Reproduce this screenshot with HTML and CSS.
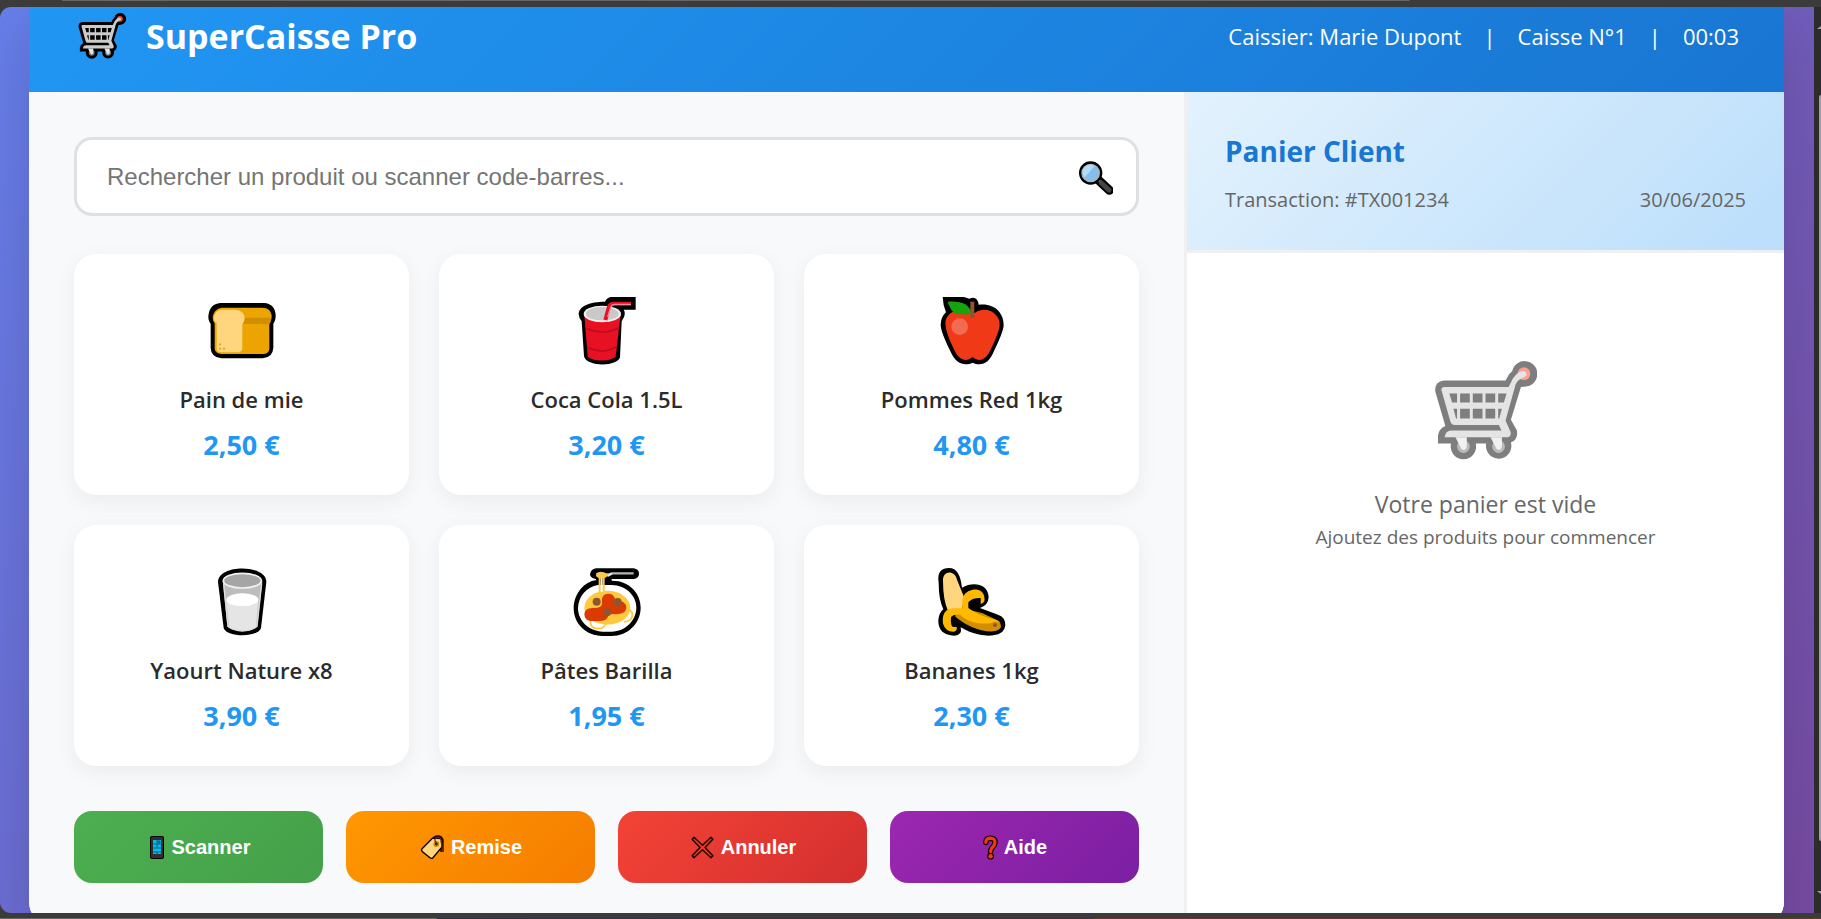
FILE: index.html
```html
<!DOCTYPE html>
<html lang="fr">
<head>
<meta charset="utf-8">
<title>SuperCaisse Pro</title>
<link rel="stylesheet" href="styles.css">
</head>
<body>
<svg class="defs" aria-hidden="true">
  <symbol id="cart" viewBox="102 56 308 308">
    <path d="M120 120H316L326 102L336 92A38 38 0 1 1 378 138L362 140L332 238L350 270Q354 298 332 306A38 38 0 1 1 258 309H227A38 38 0 1 1 153 309H114V284Q117 264 136 256L106 154Q102 124 132 120Z" fill="#000"/>
    <circle cx="371" cy="100" r="19" fill="#f8432a"/>
    <path d="M124 148Q124 140 134 140H325L338 114Q354 92 370 92Q382 96 378 107Q352 116 346 132L316 240L331 274Q334 290 320 290H134Q136 270 154 270H304L296 253H164Q154 253 151 243Z" fill="#cbcbcb"/>
    <path d="M148 159H171V186H156ZM180 159H209V186H180ZM218 159H247V186H218ZM256 159H285V186H256ZM294 159H319L311 186H294ZM160 205H171V234H168ZM180 205H209V234H180ZM218 205H247V234H218ZM256 205H285V234H256ZM294 205H305L297 234H294Z" fill="#000"/>
    <circle cx="190" cy="318" r="19" fill="#777"/><circle cx="295" cy="318" r="19" fill="#777"/>
    <path d="M166 290H200V318Q198 328 190 328Q182 326 180 317ZM271 290H305V318Q303 328 295 328Q287 326 285 317Z" fill="#e4e4e4"/>
  </symbol>
</svg>
<div class="window">
  <div class="viewport">
    <div class="app">
      <header class="topbar">
        <h1 class="brand"><svg class="brand-icon" aria-hidden="true"><use href="#cart"/></svg>SuperCaisse Pro</h1>
        <div class="session"><span>Caissier: Marie Dupont</span><span>|</span><span>Caisse N°1</span><span>|</span><span>00:03</span></div>
      </header>
      <div class="columns">
        <main class="products">
          <div class="search">
            <input class="search-input" type="text" aria-label="Rechercher un produit" placeholder="Rechercher un produit ou scanner code-barres...">
            <svg class="search-icon" viewBox="0 0 105 105" aria-hidden="true">
              <path d="M58 54L94 88" stroke="#000" stroke-width="27" stroke-linecap="round"/>
              <path d="M57 53L66 62" stroke="#aaa" stroke-width="8"/>
              <path d="M70 66L93 87" stroke="#454545" stroke-width="15" stroke-linecap="round"/>
              <circle cx="38" cy="36" r="35" fill="#000"/>
              <circle cx="38" cy="36" r="28" fill="#b4b4b4"/>
              <circle cx="38" cy="36" r="24" fill="#83beec"/>
              <path d="M20 49A22 22 0 0 1 49 16Z" fill="#b1dcf7"/>
            </svg>
          </div>
          <div class="grid">
            <article class="card">
              <svg class="card-icon" viewBox="46 45 216 216" aria-hidden="true">
                <path d="M89 69H220C243 70 255 86 255 106Q255 123 248 131V204Q246 233 216 235H92Q61 232 60 204V131Q53 124 53 109Q56 72 89 69Z"/>
                <path d="M94 83H215Q240 84 243 106Q243 122 236 128V207Q234 221 220 222H92Q73 219 72 206V130Q64 122 67 106Q72 86 94 83Z" fill="#eba400"/>
                <path d="M158 113H242Q242 126 236 132H155Z" fill="#d38e00"/>
                <path d="M93 89H134Q159 91 162 113Q161 127 155 132V207Q153 216 145 217H88Q78 215 78 205V130Q68 122 70 110Q75 91 93 89Z" fill="#ffd57d"/>
                <path d="M85 193h6M88 190v6M85 206h6M88 203v6M97 206h6M100 203v6" stroke="#d99a1d" stroke-width="3"/>
              </svg>
              <h2 class="card-name">Pain de mie</h2><p class="card-price">2,50 €</p>
            </article>
            <article class="card">
              <svg class="card-icon" viewBox="31 45 216 216" aria-hidden="true">
                <path d="M54 103C54 78 88 65 133 65Q140 51 153 51H225V89H189Q195 98 190 111L183 124L178 232C171 261 75 261 70 228L63 124Q55 115 54 103Z"/>
                <path d="M71 104L81 229C93 246 153 246 165 229L180 104Z" fill="#e81123"/>
                <path d="M78 145Q125 168 176 143M81 202Q125 225 167 200" fill="none" stroke="#bb0d20" stroke-width="5"/>
                <ellipse cx="125" cy="102" rx="56" ry="25" fill="#eee"/><ellipse cx="125" cy="101" rx="49" ry="20" fill="#c9c9c9"/>
                <path d="M134 120L145 80Q149 71 158 71H211" fill="none" stroke="#e81123" stroke-width="12"/>
                <path d="M141 111L150 82Q153 73 162 73H211" fill="none" stroke="#f58a92" stroke-width="4"/>
              </svg>
              <h2 class="card-name">Coca Cola 1.5L</h2><p class="card-price">3,20 €</p>
            </article>
            <article class="card">
              <svg class="card-icon" viewBox="46 45 216 216" aria-hidden="true">
                <path d="M66 51H130Q140 54 146 56Q170 46 174 74C220 68 251 97 249 139Q246 160 220 213C205 252 181 259 156 248C132 260 106 251 92 220Q61 158 60 136Q60 111 76 97Q67 77 66 51Z"/>
                <path d="M74 130C75 99 110 80 149 98Q155 102 163 98C200 75 239 103 237 136Q236 155 211 207C196 240 177 248 155 231C137 247 116 242 101 210Q75 160 74 130Z" fill="#f03a17"/>
                <path d="M81 65C120 62 145 70 155 102Q125 104 106 102Q91 96 81 65Z" fill="#16a30d"/>
                <path d="M155 65V114" stroke="#8e562e" stroke-width="12"/>
                <circle cx="117" cy="140" r="25" fill="#f16b50"/>
              </svg>
              <h2 class="card-name">Pommes Red 1kg</h2><p class="card-price">4,80 €</p>
            </article>
            <article class="card">
              <svg class="card-icon" viewBox="46 48 216 216" aria-hidden="true">
                <path d="M82 96C82 42 227 42 227 96L211 234C202 263 109 263 99 234Z"/>
                <path d="M96 93L110 229C120 247 190 247 200 229L215 93Z" fill="#bdbdbd"/>
                <path d="M106 149H203L196 232C184 245 126 245 116 232Z" fill="#e5e5e5"/>
                <ellipse cx="155" cy="149" rx="48" ry="19" fill="#fff"/>
                <ellipse cx="155" cy="92" rx="57" ry="22" fill="#a5a5a5" stroke="#f1f1f1" stroke-width="5"/>
                <path d="M99 100L112 229Q130 243 155 243T199 229L213 100" fill="none" stroke="#dedede" stroke-width="4"/>
              </svg>
              <h2 class="card-name">Yaourt Nature x8</h2><p class="card-price">3,90 €</p>
            </article>
            <article class="card">
              <svg class="card-icon" viewBox="31 48 216 216" aria-hidden="true">
                <path d="M106 55H219Q235 58 235 71T219 87H153V92C205 91 241 130 240 174C239 223 199 258 153 258H125C78 257 39 223 39 174C40 130 72 94 106 91V87Q90 84 88 74Q90 57 106 55Z"/>
                <path d="M112 105H153C197 106 227 137 227 174C226 213 193 244 153 245H126C84 243 52 213 52 174C53 139 78 110 112 105Z" fill="#fff"/>
                <path d="M107 73Q121 65 134 73H145L154 70H219" fill="none" stroke="#b6b6b6" stroke-width="7"/>
                <path d="M140 78L154 71" stroke="#e8e8e8" stroke-width="6"/>
                <ellipse cx="140" cy="173" rx="69" ry="51" fill="#ffc83d"/>
                <path d="M89 213Q88 235 112 236Q133 235 136 217M190 216Q220 212 214 188L205 176" fill="none" stroke="#ffc83d" stroke-width="5"/>
                <path d="M117 78V132M129 78V132" stroke="#ffc83d" stroke-width="6"/>
                <path d="M123 83V126" stroke="#fff" stroke-width="5"/>
                <ellipse cx="123" cy="76" rx="17" ry="9" fill="#ffc83d"/>
                <path d="M71 193Q72 174 96 174Q122 175 124 161V147Q126 131 145 131Q161 132 164 151Q197 152 197 174Q195 195 158 192Q142 193 140 204Q133 214 115 213H89Q72 211 71 193Z" fill="#da3b01"/>
                <g fill="#8e562e"><circle cx="108" cy="155" r="12"/><circle cx="171" cy="156" r="12"/><circle cx="139" cy="187" r="12"/></g>
              </svg>
              <h2 class="card-name">Pâtes Barilla</h2><p class="card-price">1,95 €</p>
            </article>
            <article class="card">
              <svg class="card-icon" viewBox="46 48 216 216" aria-hidden="true">
                <path d="M54 98C49 66 63 54 85 54C109 54 120 76 124 113C157 94 202 101 204 141Q203 166 178 174L232 194Q254 201 254 226Q251 254 218 256C178 261 140 244 120 232Q126 257 101 257C70 257 52 241 53 211Q55 188 68 178Q54 148 54 98Z"/>
                <path d="M67 92C66 59 103 60 109 89L130 141L124 178L102 194L82 182Q67 150 67 92Z" fill="#ffd57d"/>
                <path d="M104 193L135 177L186 190L228 210Q241 216 241 231Q237 241 219 244C174 246 133 224 104 200Z" fill="#d38e00"/>
                <path d="M143 174V157Q154 143 180 144V162Q195 157 191 142C189 112 145 111 129 137Q123 150 125 175H98C72 176 64 195 67 221Q75 246 100 245Q110 243 108 231H97Q89 229 91 201Q100 192 118 194C139 216 181 225 212 219Q225 210 240 219Q232 209 213 206Q169 195 143 174Z" fill="#ffb900"/>
                <circle cx="223" cy="225" r="6" fill="#8e562e"/>
              </svg>
              <h2 class="card-name">Bananes 1kg</h2><p class="card-price">2,30 €</p>
            </article>
          </div>
          <div class="actions">
            <button class="action scan" type="button"><svg class="i-phone" viewBox="0 0 20 27" aria-hidden="true"><rect x="3" y="2" width="14" height="23" rx="2"/><rect x="4" y="3" width="12" height="21" rx="1" fill="#303030"/><rect x="6" y="6" width="8" height="14" fill="#00bcf2"/><path d="M10 6v8M6 10h8M6 14h8M6 18h8M12 6v4M10 8h4M10 18v2" stroke="#083b4c" stroke-width=".7"/></svg>Scanner</button>
            <button class="action discount" type="button"><svg class="i-wide" viewBox="0 0 27 27" aria-hidden="true"><path d="M15 4Q21 1 23 6V18" fill="none" stroke="#250500" stroke-width="3.4"/><path d="M2.8 15L13.7 4L22 4.5L23 13L13.7 24Q12.5 25 11 23.8L3.2 17.5Q2.3 16.4 2.8 15Z" fill="#ffd57d" stroke="#000" stroke-width="1.3"/><circle cx="17.3" cy="10" r="2.9" fill="#d38e00"/><circle cx="17.3" cy="10" r="1.4" fill="#4b1904"/><path d="M17.5 9Q14 5 18 3.5Q23 3 22.5 9L23.6 18" fill="none" stroke="#76200c" stroke-width="1.3"/></svg>Remise</button>
            <button class="action cancel" type="button"><svg class="i-wide" viewBox="0 0 27 27" aria-hidden="true"><path d="M5 3.2L3.2 5.2L11 13.5L3.2 21.8L5 23.8L13.5 15.8L22 23.8L23.8 21.8L16 13.5L23.8 5.2L22 3.2L13.5 11.2Z" fill="#f03a17" stroke="#180400" stroke-width="1.5" stroke-linejoin="round"/></svg>Annuler</button>
            <button class="action help" type="button"><svg class="i-help" viewBox="0 0 17 27" aria-hidden="true"><path d="M3.8 8.4Q3.9 4.2 8.5 4.2Q13.2 4.4 13 8.5Q12.9 11 10.5 13.2Q8.6 15 8.6 17.6" fill="none" stroke="#180400" stroke-width="5.6" stroke-linecap="round"/><circle cx="8.6" cy="22.2" r="3.4" fill="#180400"/><path d="M3.8 8.4Q3.9 4.2 8.5 4.2Q13.2 4.4 13 8.5Q12.9 11 10.5 13.2Q8.6 15 8.6 17.4" fill="none" stroke="#f03a17" stroke-width="3.2" stroke-linecap="round"/><circle cx="8.6" cy="22.2" r="2.2" fill="#f03a17"/></svg>Aide</button>
          </div>
        </main>
        <aside class="basket">
          <div class="basket-head">
            <h2 class="basket-title">Panier Client</h2>
            <div class="basket-meta"><span>Transaction: #TX001234</span><span>30/06/2025</span></div>
          </div>
          <div class="empty">
            <svg class="empty-icon" aria-hidden="true"><use href="#cart"/></svg>
            <p class="empty-title">Votre panier est vide</p>
            <p class="empty-hint">Ajoutez des produits pour commencer</p>
          </div>
        </aside>
      </div>
    </div>
  </div>
  <div class="scrollbar"><span class="arrow-up"></span><span class="thumb"></span><span class="arrow-down"></span></div>
</div>
</body>
</html>
```
FILE: styles.css
```css
* { box-sizing: border-box; margin: 0; padding: 0; }

body {
  background: #3b3b3b;
  font-family: "Segoe UI", "Open Sans", "Noto Sans", sans-serif;
  color: #2b2b2b;
}

.defs { display: none; }

.window {
  display: flex;
  height: 100vh;
  padding: 7px 0 6px;
  background:
    linear-gradient(#666, #666) 62px 0 / 74% 1px no-repeat,
    linear-gradient(90deg, #666 24%, #334 24%, #423038 60%, #623632 60%) 0 100% / 100% 1px no-repeat,
    #3b3b3b;
}

.viewport {
  flex: 1;
  display: flex;
  overflow: hidden;
  padding: 0 30px 0 29px;
  border-radius: 11px 0 0 11px;
  background: linear-gradient(135deg, #667eea, #764ba2);
}

.scrollbar {
  width: 7px;
  display: flex;
  flex-direction: column;
  align-items: flex-end;
  overflow: hidden;
  background: #2c2c2c;
}
.thumb { flex: 1; width: 2px; margin: 66px 0 50px; border-radius: 2px 0 0 2px; background: #9f9f9f; }
.arrow-up, .arrow-down { width: 4px; height: 3px; background: #9f9f9f; }
.arrow-up { margin-top: 19px; clip-path: polygon(100% 0, 100% 100%, 0 100%); }
.arrow-down { margin-bottom: 19px; clip-path: polygon(0 0, 100% 0, 100% 100%); }

.app {
  flex: 1;
  display: flex;
  flex-direction: column;
  margin-bottom: -11px;
  overflow: hidden;
  border-radius: 0 0 22px 22px;
  background: #fff;
  box-shadow: 0 20px 60px rgba(0, 0, 0, .15);
}

.topbar {
  display: flex;
  justify-content: space-between;
  align-items: center;
  padding: 0 45px 27px 49px;
  line-height: 58px;
  background: linear-gradient(135deg, #2196f3, #1976d2);
  color: #fff;
}
.brand { display: flex; align-items: center; gap: 20px; font-size: 34px; font-weight: 700; }
.brand-icon { width: 48px; height: 48px; }
.session { display: flex; gap: 22px; font-size: 22px; }

.columns { flex: 1; display: flex; }

.products { flex: 1; padding: 45px; background: #f8f9fb; }

.search { position: relative; margin-bottom: 38px; }
.search-input {
  display: block;
  width: 100%;
  height: 79px;
  padding: 0 80px 0 30px;
  border: 3px solid #e0e0e0;
  border-radius: 18px;
  background: #fff;
  font: 24px "Liberation Sans", Arial, sans-serif;
}
.search-input::placeholder { color: #757575; opacity: 1; }
.search-icon { position: absolute; right: 26px; top: 24px; width: 35px; height: 35px; }

.grid { display: grid; grid-template-columns: repeat(3, 1fr); gap: 30px; margin-bottom: 45px; }
.card {
  display: flex;
  flex-direction: column;
  align-items: center;
  padding: 41px 16px 34px;
  border-radius: 22px;
  background: #fff;
  box-shadow: 0 6px 22px rgba(0, 0, 0, .06);
}
.card-icon { width: 72px; height: 72px; margin-bottom: 16px; }
.card-name { margin-bottom: 14px; font-size: 22px; line-height: 32px; font-weight: 600; }
.card-price { font-size: 27px; line-height: 32px; font-weight: 700; color: #2196f3; }

.actions { display: grid; grid-template-columns: repeat(4, 1fr); gap: 23px; }
.action {
  display: flex;
  align-items: center;
  justify-content: center;
  gap: 5px;
  height: 72px;
  border: 0;
  border-radius: 18px;
  color: #fff;
  font: bold 20px "Liberation Sans", Arial, sans-serif;
}
.action svg { height: 27px; }
.i-phone { width: 20px; }
.i-wide { width: 27px; }
.i-help { width: 17px; }
.scan { background: linear-gradient(135deg, #4caf50, #45a049); }
.discount { background: linear-gradient(135deg, #ff9800, #f57c00); }
.cancel { background: linear-gradient(135deg, #f44336, #d32f2f); }
.help { background: linear-gradient(135deg, #9c27b0, #7b1fa2); }

.basket { width: 600px; border-left: 3px solid #f0f0f0; background: #fff; }
.basket-head {
  padding: 39px 38px 35px;
  border-bottom: 3px solid #f0f0f0;
  background: linear-gradient(135deg, #e3f2fd, #bbdefb);
}
.basket-title { margin-bottom: 14px; font-size: 28px; line-height: 40px; font-weight: 700; color: #1976d2; }
.basket-meta { display: flex; justify-content: space-between; font-size: 20px; line-height: 30px; color: #666; }

.empty { display: flex; flex-direction: column; align-items: center; padding: 106px 38px; color: #666; }
.empty-icon { width: 103px; height: 103px; margin-bottom: 26px; opacity: .5; }
.empty-title { font-size: 23px; line-height: 32px; }
.empty-hint { font-size: 19px; line-height: 34px; }
```
